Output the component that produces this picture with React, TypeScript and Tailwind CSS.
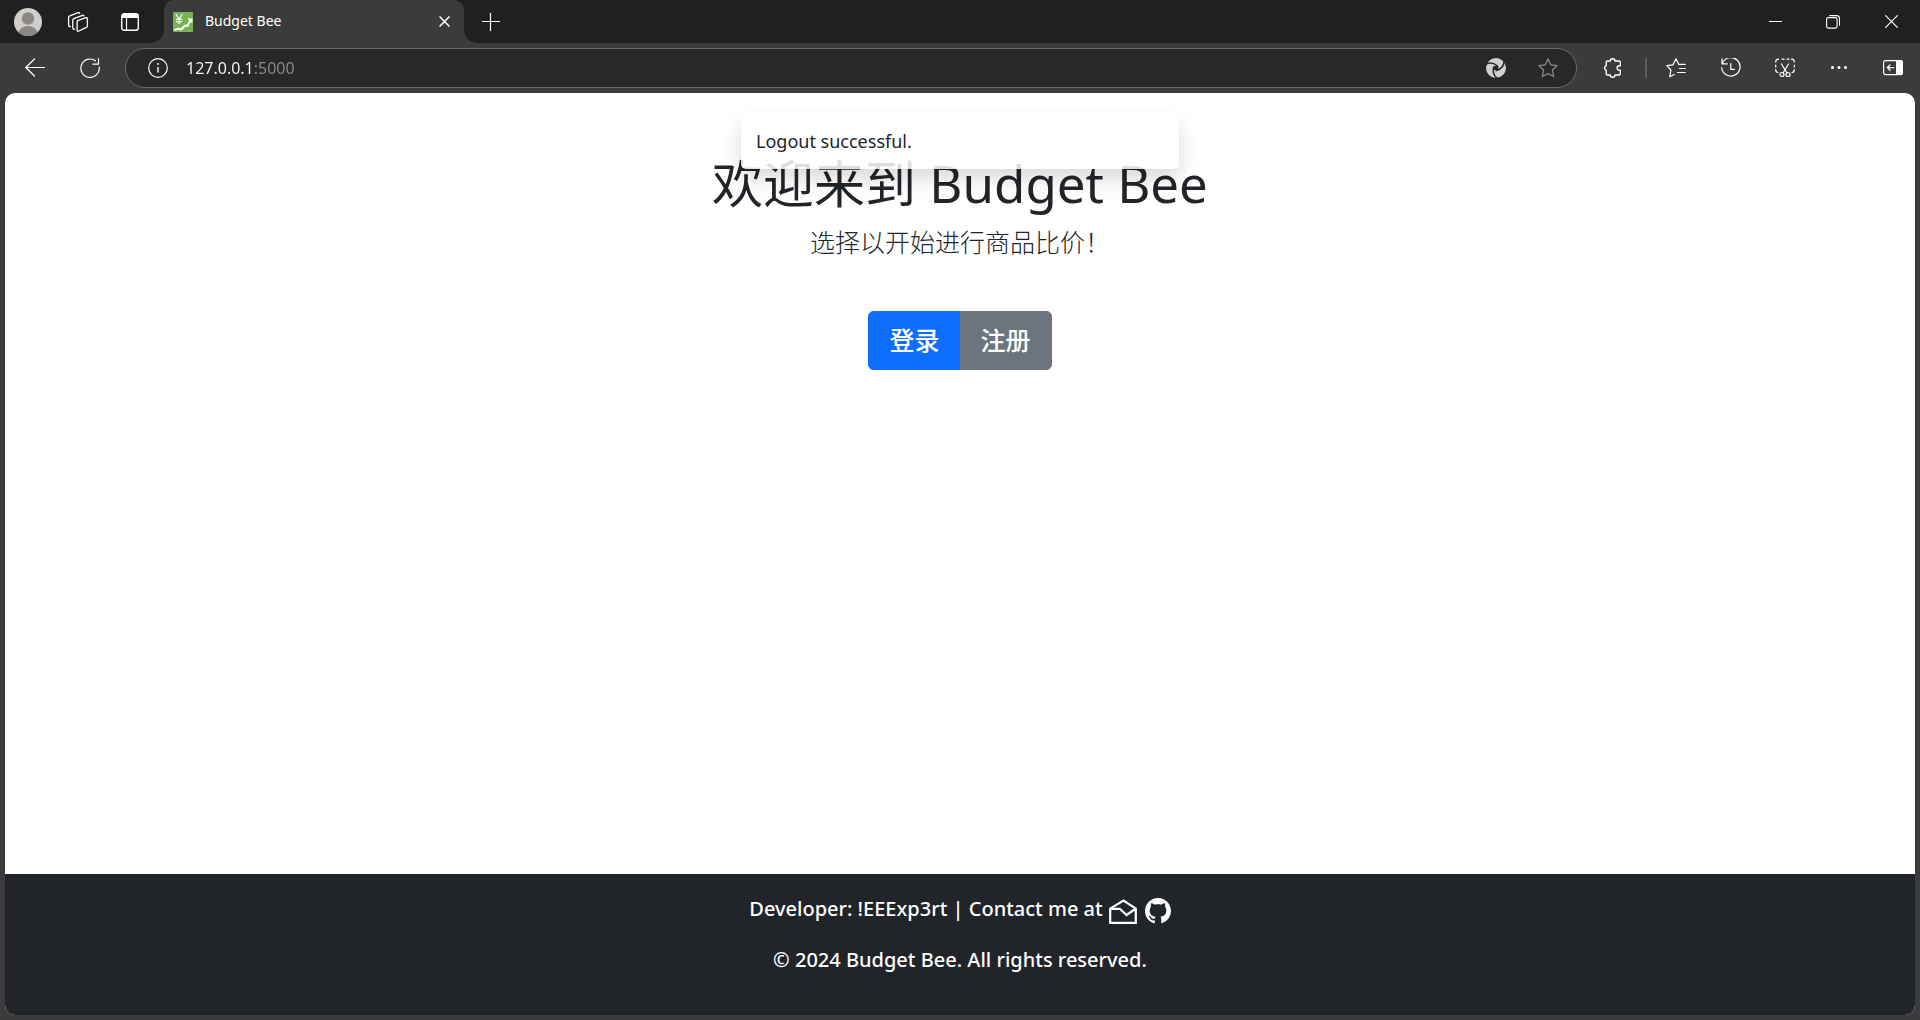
import React from "react";

const latin = "font-['Noto_Sans','Noto_Sans_CJK_SC',sans-serif]";

type IconProps = { size?: number; className?: string; children: React.ReactNode };

function Icon({ size = 20, className = "", children }: IconProps) {
  return (
    <svg
      width={size}
      height={size}
      viewBox="0 0 20 20"
      fill="none"
      stroke="currentColor"
      strokeWidth="1.2"
      strokeLinecap="round"
      strokeLinejoin="round"
      className={className}
      aria-hidden="true"
    >
      {children}
    </svg>
  );
}

function ChromeButton({ label, className, children }: { label: string; className: string; children: React.ReactNode }) {
  return (
    <button type="button" aria-label={label} className={`flex shrink-0 items-center justify-center ${className}`}>
      {children}
    </button>
  );
}

function TabStrip() {
  return (
    <div className="flex h-[43px] bg-[#202020] text-white">
      <ChromeButton label="Profile" className="w-[52px] pl-1">
        <svg width="28" height="28" viewBox="0 0 28 28" aria-hidden="true">
          <clipPath id="avatar">
            <circle cx="14" cy="14" r="14" />
          </clipPath>
          <g clipPath="url(#avatar)">
            <rect width="28" height="28" fill="#d0cecb" />
            <circle cx="14" cy="10.5" r="6.2" fill="#8b8785" />
            <ellipse cx="14" cy="25.5" rx="9.5" ry="7.5" fill="#8b8785" />
          </g>
        </svg>
      </ChromeButton>
      <ChromeButton label="Workspaces" className="w-[52px]">
        <svg width="22" height="22" viewBox="0 0 22 22" fill="none" stroke="currentColor" strokeWidth="1.3" strokeLinejoin="round" strokeLinecap="round" aria-hidden="true">
          <path d="M10.6 9.6 19 6.7q1.4-.4 1.4 1v7.2q0 1-1 1.4L11.8 20q-1.700.7-1.700-1v-8.200q0-.9.500-1.200Z" />
          <path d="M7.6 18.2q-1.800.2-1.800-1.500V9.2q0-1.200 1.100-1.600L15.500 4.300q1.200-.3 1.500.7" />
          <path d="M3.500 15.600q-1.900 0-1.900-1.700V6.500q0-1.200 1.200-1.600L11 1.700q1.300-.4 1.700.7" />
        </svg>
      </ChromeButton>
      <ChromeButton label="Tab actions" className="w-[52px]">
        <svg width="18" height="18" viewBox="0 0 18 18" fill="none" stroke="currentColor" strokeWidth="1.4" aria-hidden="true">
          <rect x=".7" y=".7" width="16.6" height="16.6" rx="2.5" />
          <path d="M1 3h16" strokeWidth="4" />
          <path d="M5.500 5v12" strokeWidth="1.2" />
        </svg>
      </ChromeButton>
      <div className="relative ml-2 flex w-[300px] items-center rounded-t-[10px] bg-[#3b3b3b] pr-3 pl-[9px] before:absolute before:bottom-0 before:-left-3 before:size-3 before:bg-[radial-gradient(circle_at_0_0,transparent_11px,#3b3b3b_12px)] after:absolute after:-right-3 after:bottom-0 after:size-3 after:bg-[radial-gradient(circle_at_100%_0,transparent_11px,#3b3b3b_12px)]">
        <svg width="20" height="20" viewBox="0 0 20 20" fill="none" stroke="#fff" aria-hidden="true">
          <rect width="20" height="20" rx="1" fill="#77b255" stroke="none" />
          <path d="m2.800 2 3.300 5 3.300-5M6.100 7v5M3 7.300h6.200M3 9.600h6.200" strokeWidth="1.2" />
          <path d="m1.300 18 4.200-1.300 2.300 1 4.500-4.200 2 .6L18 7.500" strokeWidth="2" strokeLinejoin="round" />
          <path d="M14.800 7.200h4v3.500" strokeWidth="1.3" />
        </svg>
        <span className="ml-3 flex-1 pb-[2px] text-[14px]">Budget Bee</span>
        <ChromeButton label="Close tab" className="size-4">
          <svg width="11" height="11" viewBox="0 0 11 11" stroke="currentColor" strokeWidth="1.5" aria-hidden="true">
            <path d="m.5.5 10 10m0-10-10 10" />
          </svg>
        </ChromeButton>
      </div>
      <ChromeButton label="New tab" className="w-[54px]">
        <svg width="18" height="18" viewBox="0 0 18 18" stroke="currentColor" strokeWidth="1.2" aria-hidden="true">
          <path d="M8.500 0v18M0 8.500h18" />
        </svg>
      </ChromeButton>
      <div className="flex-1" />
      <ChromeButton label="Minimize" className="w-[58px]">
        <svg width="13" height="13" viewBox="0 0 13 13" stroke="currentColor" aria-hidden="true">
          <path d="M0 6.500h13" />
        </svg>
      </ChromeButton>
      <ChromeButton label="Restore" className="w-[58px]">
        <svg width="14" height="14" viewBox="0 0 14 14" fill="none" stroke="currentColor" strokeWidth="1.1" aria-hidden="true">
          <rect x=".6" y="2.6" width="10.5" height="10.5" rx="1.8" />
          <path d="M3.200.6h7.300a3 3 0 0 1 3 3v7.200" />
        </svg>
      </ChromeButton>
      <ChromeButton label="Close" className="w-[58px]">
        <svg width="13" height="13" viewBox="0 0 13 13" stroke="currentColor" strokeWidth="1.2" aria-hidden="true">
          <path d="m.3.3 12.400 12.400m0-12.400L.3 12.700" />
        </svg>
      </ChromeButton>
    </div>
  );
}

function Toolbar() {
  return (
    <div className="flex h-[50px] items-center bg-[#3b3b3b] pl-2 text-white">
      <ChromeButton label="Back" className="h-10 w-[54px]">
        <Icon>
          <path d="M19.500 9.500H.8M9.500 1 .8 9.500l8.700 8.500" />
        </Icon>
      </ChromeButton>
      <ChromeButton label="Refresh" className="h-10 w-[55px]">
        <Icon>
          <path d="M15.500 2.800A9.200 9.200 0 1 0 19.200 9M18.500.6v5.600h-5.600" />
        </Icon>
      </ChromeButton>
      <form className="ml-2 flex h-10 flex-1 items-center rounded-full border border-[#6b6b6b] bg-[#282828] pr-3 pl-4">
        <ChromeButton label="Site information" className="size-8">
          <Icon>
            <circle cx="10" cy="10" r="9.3" />
            <path d="M10 9v5.500" strokeLinecap="butt" strokeWidth="1.4" />
            <circle cx="10" cy="6" r=".9" fill="currentColor" stroke="none" />
          </Icon>
        </ChromeButton>
        <input
          aria-label="Address"
          defaultValue="127.0.0.1:5000"
          className="ml-3 min-w-0 flex-1 bg-[linear-gradient(90deg,#fff_67px,#8c8c8c_67px)] bg-clip-text text-[16px] text-transparent outline-none"
        />
        <ChromeButton label="Page assistant" className="size-8">
          <Icon>
            <circle cx="10" cy="10" r="10" fill="#d0d0d0" stroke="none" />
            <g stroke="#282828" strokeWidth="1.5">
              <circle cx="10" cy="10" r="1.6" fill="#282828" />
              <path d="M-1 7Q5.500 2.500 12 8.500" />
              <path d="M-1 7Q5.500 2.500 12 8.500" transform="rotate(120 10 10)" />
              <path d="M-1 7Q5.500 2.500 12 8.500" transform="rotate(240 10 10)" />
            </g>
          </Icon>
        </ChromeButton>
        <ChromeButton label="Add to favorites" className="ml-5 size-8 text-[#8f8f8f]">
          <Icon>
            <path d="m10 .8 2.700 6 6.500.8-4.800 4.400 1.300 6.600L10 15.400l-5.700 3.200L5.600 12 .8 7.600l6.500-.8Z" />
          </Icon>
        </ChromeButton>
      </form>
      <ChromeButton label="Extensions" className="ml-2 h-10 w-[56px]">
        <Icon>
          <path
            strokeWidth="1.4"
            d="M7.200 3a2.400 2.300 0 0 1 4.800 0h3.800q1.500 0 1.500 1.500v3.300h-1a2.200 2.200 0 0 0 0 4.400h1v3.300q0 1.500-1.500 1.500h-3.800a2.400 2.300 0 0 1-4.800 0H4.700q-1.500 0-1.500-1.500v-3.300a2.300 2.300 0 0 1 0-4.400V4.500q0-1.500 1.500-1.500Z"
          />
        </Icon>
      </ChromeButton>
      <div className="mr-px ml-1 h-5 w-[2px] bg-[#5c5c5c]" />
      <ChromeButton label="Favorites" className="h-10 w-[55px]">
        <Icon>
          <path d="M8.200 16.500 3.800 18.700 4.900 12 .8 7.600l6.200-.8L10 .8l2.800 5.600h6.400M13.500 10.500h5.800M11.500 14.500h7.800" />
        </Icon>
      </ChromeButton>
      <ChromeButton label="History" className="h-10 w-[55px]">
        <Icon>
          <path d="M1.500 5A9.200 9.200 0 1 1 .7 9.500M1 .8v5h5.300M9.800 5.500v5.800h3.600" />
        </Icon>
      </ChromeButton>
      <ChromeButton label="Screenshot" className="h-10 w-[54px]">
        <Icon>
          <path d="M3.500 1.200Q.7 1.200.7 4M7 1.200h2M12 1.200h2M16.500 1.200q2.800 0 2.800 2.800M.7 7v2M19.300 7v2M.7 11.500q0 3 2.300 3M19.300 11.500q0 3-2.300 3M6.500 6l5.500 9M13.500 6 8 15" />
          <circle cx="7" cy="16.5" r="2" />
          <circle cx="13" cy="16.5" r="2" />
        </Icon>
      </ChromeButton>
      <ChromeButton label="Settings and more" className="h-10 w-[54px]">
        <Icon>
          <g fill="currentColor" stroke="none">
            <circle cx="3.5" cy="9.5" r="1.5" />
            <circle cx="10" cy="9.5" r="1.5" />
            <circle cx="16.5" cy="9.5" r="1.5" />
          </g>
        </Icon>
      </ChromeButton>
      <ChromeButton label="Show sidebar" className="h-10 w-[54px]">
        <Icon>
          <rect x=".6" y="2.6" width="18.8" height="14" rx="2" />
          <path d="M13 2h4.500A2.500 2.500 0 0 1 20 4.500v10a2.500 2.500 0 0 1-2.500 2.500H13Z" fill="currentColor" stroke="none" />
          <path d="M10.800 9.600H4.500M7 7 4.400 9.600 7 12.200" strokeWidth="1.4" />
        </Icon>
      </ChromeButton>
    </div>
  );
}

function Footer() {
  return (
    <footer className="flex flex-col items-center bg-[#212529] pt-5 pb-10 text-[20px] leading-[30px] font-medium text-white">
      <p className="flex items-start">
        Developer: !EEExp3rt | Contact me at
        <a href="mailto:developer@budgetbee.test" aria-label="Email" className="ml-[6px] pt-[5px]">
          <svg width="28" height="26" viewBox="0 1 28 26" fill="none" stroke="currentColor" strokeWidth="2.2" aria-hidden="true">
            <path d="M1.200 10.500v14.300h25.600V10.500L14.500 2.500Z" />
            <path d="M1.500 10.800h9.300l6.800 6.200 8.600-6" />
          </svg>
        </a>
        <a href="https://github.com" aria-label="GitHub" className="ml-2 pt-1">
          <svg width="26" height="26" viewBox="0 0 16 16" fill="currentColor" aria-hidden="true">
            <path d="M8 0C3.580 0 0 3.580 0 8c0 3.540 2.290 6.530 5.470 7.590.4.070.550-.170.550-.380 0-.190-.010-.820-.010-1.490-2.010.370-2.530-.490-2.690-.940-.090-.230-.480-.940-.820-1.130-.280-.150-.680-.520-.010-.530.630-.010 1.080.580 1.230.820.720 1.210 1.870.870 2.330.660.070-.520.280-.870.510-1.070-1.780-.200-3.640-.890-3.640-3.950 0-.870.310-1.590.820-2.150-.080-.200-.360-1.020.080-2.120 0 0 .670-.210 2.200.820.640-.180 1.320-.270 2-.270s1.360.090 2 .270c1.530-1.040 2.200-.820 2.200-.820.440 1.100.160 1.920.080 2.120.510.560.820 1.270.820 2.150 0 3.070-1.870 3.750-3.650 3.950.290.250.540.730.540 1.480 0 1.070-.010 1.930-.010 2.200 0 .210.150.460.550.380A8.010 8.010 0 0 0 16 8c0-4.420-3.580-8-8-8Z" />
          </svg>
        </a>
      </p>
      <p className="mt-5">© 2024 Budget Bee. All rights reserved.</p>
    </footer>
  );
}

export default function App() {
  return (
    <div className={`flex min-h-screen flex-col bg-[#3b3b3b] ${latin}`}>
      <header>
        <TabStrip />
        <Toolbar />
      </header>
      <div className="relative mx-[5px] mb-[5px] flex flex-1 flex-col overflow-hidden rounded-[10px] bg-white text-[#212529]">
        <main className="flex flex-1 flex-col items-center pt-[60px]">
          <h1 className="text-[51px] leading-[60px]">欢迎来到 Budget Bee</h1>
          <p className="mt-[10px] text-[25px] leading-[38px] font-light">选择以开始进行商品比价！</p>
          <div className="mt-[50px] flex overflow-hidden rounded-md text-[25px] leading-[37px] font-medium text-white">
            <button type="button" className="border border-[#0d6efd] bg-[#0d6efd] px-5 py-[10px]">登录</button>
            <button type="button" className="-ml-px border border-[#6c757d] bg-[#6c757d] px-5 py-[10px]">注册</button>
          </div>
        </main>
        <div className="absolute inset-x-0 top-5 flex justify-center">
          <div role="status" className="w-[438px] rounded-[5px] bg-white/85 px-[15px] py-[15px] text-[18px] leading-[26px] shadow-[0_10px_20px_rgba(0,0,0,0.15)]">
            Logout successful.
          </div>
        </div>
        <Footer />
      </div>
    </div>
  );
}
